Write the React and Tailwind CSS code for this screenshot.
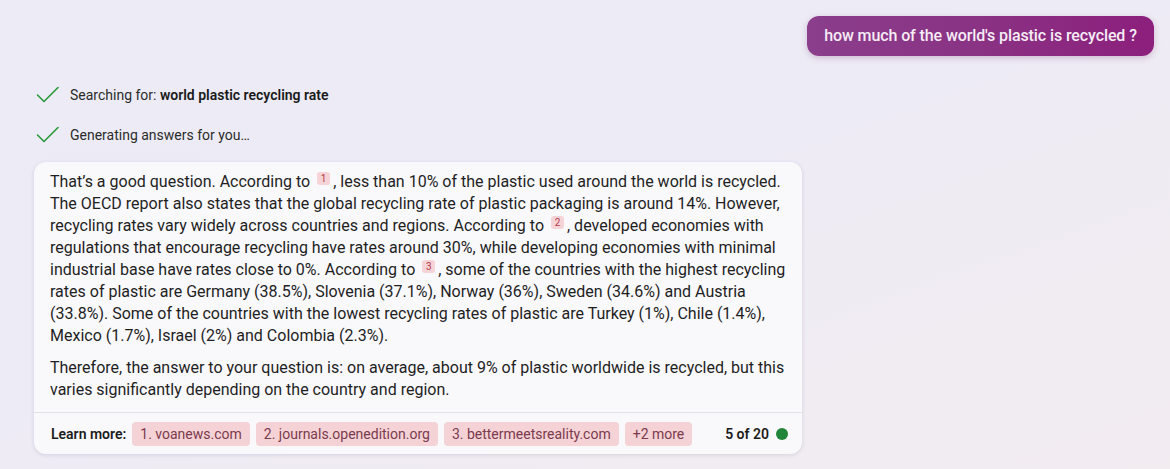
import React from "react";

function Check() {
  return (
    <svg width="24" height="18" viewBox="0 0 24 18" className="shrink-0">
      <path d="M1.5 9 L8 15.5 L22 1.5" fill="none" stroke="#2a9a3c" strokeWidth="1.6" strokeLinecap="round" strokeLinejoin="round" />
    </svg>
  );
}

function Ref({ n }) {
  return (
    <span className="relative inline-flex items-center justify-center align-top mt-[1px] mx-[3px] w-[13px] h-[13px] rounded-[3px] bg-[#f6d3d7] text-[10px] leading-none text-[#b23a4a]">
      {n}
    </span>
  );
}

function Chip({ children }) {
  return (
    <span className="inline-flex items-center h-[24px] px-[8px] rounded-[4px] bg-[#f5d2d5] text-[14px] text-[#7b3a4e]">
      {children}
    </span>
  );
}

export default function App() {
  return (
    <div
      className="w-full h-[469px] overflow-hidden bg-[linear-gradient(160deg,#ecebf6_0%,#edebf5_45%,#f1ecf2_80%,#f2ecf1_100%)]"
      style={{ fontFamily: 'Roboto, "Noto Sans", sans-serif' }}
    >
      <div className="flex flex-col pt-[16px]">
        <div className="flex justify-end pr-[16px]">
          <div className="h-[40px] w-[347px] flex items-center justify-center rounded-[12px] bg-[linear-gradient(90deg,#8a3e8b_0%,#8a3284_50%,#8c1f7c_100%)] shadow-[0_2px_6px_rgba(120,40,110,0.25)] text-[16px] font-medium tracking-[-0.1px] text-[#f6ecf5]">
            how much of the world's plastic is recycled ?
          </div>
        </div>

        <div className="flex flex-col pl-[36px] mt-[29px] gap-[20px] text-[14px] text-[#2b2b2b]">
          <div className="flex items-center gap-[10px] h-[20px]">
            <Check />
            <span>
              Searching for: <span className="font-semibold text-[#1a1a1a]">world plastic recycling rate</span>
            </span>
          </div>
          <div className="flex items-center gap-[10px] h-[20px]">
            <Check />
            <span>Generating answers for you…</span>
          </div>
        </div>

        <div className="ml-[34px] mt-[17px] w-[768px] rounded-[12px] bg-[#f9f8fb] shadow-[0_1px_4px_rgba(60,40,90,0.14)]">
          <div className="px-[16px] pt-[9px] pb-[11px] text-[16px] leading-[22px] text-[#1f1f1f]">
            <p className="mb-[10px]">
              That’s a good question. According to <Ref n="1" />, less than 10% of the plastic used around the world is recycled. The OECD report also states that the global recycling rate of plastic packaging is around 14%. However, recycling rates vary widely across countries and regions. According to <Ref n="2" />, developed economies with regulations that encourage recycling have rates around 30%, while developing economies with minimal industrial base have rates close to 0%. According to <Ref n="3" />, some of the countries with the highest recycling rates of plastic are Germany (38.5%), Slovenia (37.1%), Norway (36%), Sweden (34.6%) and Austria (33.8%). Some of the countries with the lowest recycling rates of plastic are Turkey (1%), Chile (1.4%), Mexico (1.7%), Israel (2%) and Colombia (2.3%).
            </p>
            <p>
              Therefore, the answer to your question is: on average, about 9% of plastic worldwide is recycled, but this varies significantly depending on the country and region.
            </p>
          </div>
          <div className="border-t border-[#e3e1e8] flex items-center pl-[17px] pr-[14px] pt-[9px] pb-[8px]">
            <span className="text-[14px] font-semibold text-[#1c1c1c] mr-[6px]">Learn more:</span>
            <div className="flex items-center gap-[6px]">
              <Chip>1. voanews.com</Chip>
              <Chip>2. journals.openedition.org</Chip>
              <Chip>3. bettermeetsreality.com</Chip>
              <Chip>+2 more</Chip>
            </div>
            <div className="ml-auto flex items-center gap-[7px]">
              <span className="text-[14px] font-semibold text-[#1c1c1c]">5 of 20</span>
              <span className="w-[12px] h-[12px] rounded-full bg-[#22863a]" />
            </div>
          </div>
        </div>
      </div>
    </div>
  );
}
